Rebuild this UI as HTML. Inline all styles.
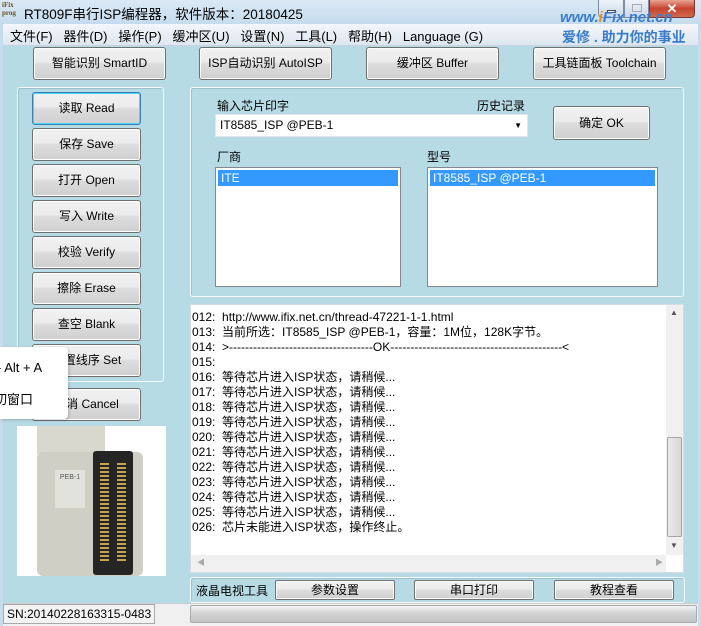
<!DOCTYPE html>
<html><head><meta charset="utf-8"><style>
*{margin:0;padding:0;box-sizing:border-box}
body{width:701px;height:626px;overflow:hidden;position:relative;background:#b7dbe5;font-family:"Liberation Sans","Noto Sans CJK SC",sans-serif;font-size:12px;color:#000}
.a{position:absolute}
.btn{position:absolute;border:1px solid #707070;border-radius:3px;background:linear-gradient(#f2f2f2,#ebebeb 45%,#dddddd 50%,#cfcfcf);text-align:center;font-size:12px;color:#000;box-shadow:inset 0 0 0 1px #fcfcfc}
.grp{position:absolute;border:1px solid #f4fafc;border-radius:3px;box-shadow:inset 1px 1px 0 #9cc1cc}
.list{position:absolute;background:#fff;border:1px solid #828790}
.sel{background:#3399ff;color:#fff;height:16px;line-height:16px;padding-left:3px;margin:2px 2px 0 2px}
.log div{height:15px;line-height:15px;white-space:pre}
</style></head><body>
<div class="a" style="left:0;top:0;width:701px;height:24px;background:linear-gradient(#dbe9f5,#c5dcee)"></div>
<div class="a" style="left:2px;top:1px;width:16px;height:20px;font:bold 7px 'Liberation Serif',serif;color:#6a5520;line-height:8px">iFix<br>prog</div>
<div class="a" style="left:24px;top:3px;font-size:13.5px">RT809F串行ISP编程器，软件版本：20180425</div>
<div class="a" style="left:598px;top:0;width:26px;height:18px;border:1px solid #7c8ea5;border-top:0;border-radius:0 0 0 4px;background:linear-gradient(#eef3f9,#cad9ea)"><div class="a" style="left:8px;top:10px;width:9px;height:3px;background:#fff;border:1px solid #444"></div></div>
<div class="a" style="left:624px;top:0;width:25px;height:18px;border:1px solid #7c8ea5;border-top:0;background:linear-gradient(#eef3f9,#cad9ea)"><div class="a" style="left:7px;top:4px;width:10px;height:8px;border:1px solid #aaa"></div></div>
<div class="a" style="left:649px;top:0;width:46px;height:18px;border:1px solid #7a3530;border-top:0;border-radius:0 0 4px 0;background:linear-gradient(#e8a493,#c7432f 50%,#d06a4e);color:#fff;font-weight:bold;text-align:center;font-size:13px;line-height:17px">✕</div>
<div class="a" style="left:560px;top:9px;font:italic bold 15px 'Liberation Sans',sans-serif;color:#3a7cc9">www.<span style="color:#e98a1a">i</span>Fix.net.cn</div>
<div class="a" style="left:3px;top:24px;width:696px;height:22px;background:linear-gradient(#f4f7fb,#dde6ef);border-bottom:1px solid #c8d3df"></div>
<div class="a" style="left:10px;top:26px;font-size:13px;white-space:nowrap">文件(F)&nbsp;&nbsp;&nbsp;器件(D)&nbsp;&nbsp;&nbsp;操作(P)&nbsp;&nbsp;&nbsp;缓冲区(U)&nbsp;&nbsp;&nbsp;设置(N)&nbsp;&nbsp;&nbsp;工具(L)&nbsp;&nbsp;&nbsp;帮助(H)&nbsp;&nbsp;&nbsp;Language (G)</div>
<div class="a" style="left:562px;top:27px;font-size:14px;font-weight:bold;color:#3a7cc9">爱修 . 助力你的事业</div>
<div class="a" style="left:0;top:24px;width:3px;height:602px;background:#c5dcee"></div>
<div class="a" style="left:698px;top:24px;width:3px;height:602px;background:#c5dcee"></div>
<div class="btn" style="left:33px;top:47px;width:133px;height:33px;line-height:31px">智能识别 SmartID</div>
<div class="btn" style="left:199px;top:47px;width:133px;height:33px;line-height:31px">ISP自动识别 AutoISP</div>
<div class="btn" style="left:366px;top:47px;width:133px;height:33px;line-height:31px">缓冲区 Buffer</div>
<div class="btn" style="left:533px;top:47px;width:133px;height:33px;line-height:31px">工具链面板 Toolchain</div>
<div class="grp" style="left:17px;top:87px;width:147px;height:295px"></div>
<div class="btn" style="left:32px;top:92px;width:109px;height:33px;line-height:31px;border-color:#3c7fb1;box-shadow:inset 0 0 0 1px #48d5f9">读取 Read</div>
<div class="btn" style="left:32px;top:128px;width:109px;height:33px;line-height:31px">保存 Save</div>
<div class="btn" style="left:32px;top:164px;width:109px;height:33px;line-height:31px">打开 Open</div>
<div class="btn" style="left:32px;top:200px;width:109px;height:33px;line-height:31px">写入 Write</div>
<div class="btn" style="left:32px;top:236px;width:109px;height:33px;line-height:31px">校验 Verify</div>
<div class="btn" style="left:32px;top:272px;width:109px;height:33px;line-height:31px">擦除 Erase</div>
<div class="btn" style="left:32px;top:308px;width:109px;height:33px;line-height:31px">查空 Blank</div>
<div class="btn" style="left:32px;top:344px;width:109px;height:33px;line-height:31px">设置线序 Set</div>
<div class="btn" style="left:32px;top:388px;width:109px;height:33px;line-height:31px">取消 Cancel</div>
<div class="a" style="left:0;top:347px;width:68px;height:72px;background:#fff;border-radius:0 4px 4px 0;box-shadow:1px 1px 3px rgba(0,0,0,.2);font-size:13px;overflow:hidden">
<div class="a" style="left:-3px;top:13px;white-space:nowrap">- Alt + A</div>
<div class="a" style="left:-6px;top:42px;white-space:nowrap">切窗口</div></div>
<div class="a" style="left:17px;top:426px;width:149px;height:150px;background:#fff;overflow:hidden">
<div class="a" style="left:20px;top:0;width:68px;height:28px;background:#d8d8cf"></div>
<div class="a" style="left:20px;top:26px;width:106px;height:124px;background:#cfcfc6;border-radius:6px"></div>
<div class="a" style="left:38px;top:44px;width:30px;height:38px;background:#e2e2dc;font-size:7px;text-align:center;color:#555;line-height:16px">PEB-1</div>
<div class="a" style="left:76px;top:25px;width:40px;height:124px;background:#252525;border-radius:3px"></div>
<div class="a" style="left:83px;top:37px;width:9px;height:100px;background:repeating-linear-gradient(#c9a34a 0 2px,#252525 2px 4px)"></div>
<div class="a" style="left:100px;top:37px;width:9px;height:100px;background:repeating-linear-gradient(#c9a34a 0 2px,#252525 2px 4px)"></div>
</div>
<div class="grp" style="left:190px;top:87px;width:494px;height:210px"></div>
<div class="a" style="left:217px;top:97px">输入芯片印字</div>
<div class="a" style="left:477px;top:97px">历史记录</div>
<div class="a" style="left:215px;top:114px;width:313px;height:23px;background:#fff;border:1px solid #e2e6ea;line-height:21px;padding-left:4px">IT8585_ISP @PEB-1<span class="a" style="right:5px;top:0;font-size:8px">▼</span></div>
<div class="btn" style="left:553px;top:106px;width:97px;height:34px;line-height:32px">确定 OK</div>
<div class="a" style="left:217px;top:148px">厂商</div>
<div class="a" style="left:427px;top:148px">型号</div>
<div class="list" style="left:215px;top:167px;width:186px;height:120px"><div class="sel">ITE</div></div>
<div class="list" style="left:427px;top:167px;width:231px;height:120px"><div class="sel">IT8585_ISP @PEB-1</div></div>
<div class="a" style="left:190px;top:304px;width:494px;height:269px;background:#fff;border:1px solid #d5dde3"></div>
<div class="a log" style="left:192px;top:310px;font-size:12px">
<div>012:  http://www.ifix.net.cn/thread-47221-1-1.html</div>
<div>013:  当前所选：IT8585_ISP @PEB-1，容量：1M位，128K字节。</div>
<div>014:  &gt;------------------------------------OK-------------------------------------------&lt;</div>
<div>015:</div>
<div>016:  等待芯片进入ISP状态，请稍候...</div>
<div>017:  等待芯片进入ISP状态，请稍候...</div>
<div>018:  等待芯片进入ISP状态，请稍候...</div>
<div>019:  等待芯片进入ISP状态，请稍候...</div>
<div>020:  等待芯片进入ISP状态，请稍候...</div>
<div>021:  等待芯片进入ISP状态，请稍候...</div>
<div>022:  等待芯片进入ISP状态，请稍候...</div>
<div>023:  等待芯片进入ISP状态，请稍候...</div>
<div>024:  等待芯片进入ISP状态，请稍候...</div>
<div>025:  等待芯片进入ISP状态，请稍候...</div>
<div>026:  芯片未能进入ISP状态，操作终止。</div>
</div>
<div class="a" style="left:666px;top:305px;width:17px;height:250px;background:#f0f0f0"></div>
<div class="a" style="left:667px;top:437px;width:15px;height:100px;background:linear-gradient(90deg,#eaeaea,#d8d8d8);border:1px solid #a5a5a5;border-radius:2px"></div>
<div class="a" style="left:670px;top:308px;font-size:8px;color:#555">▲</div>
<div class="a" style="left:670px;top:541px;font-size:8px;color:#555">▼</div>
<div class="a" style="left:191px;top:555px;width:475px;height:17px;background:#f0f0f0"></div>
<div class="a" style="left:197px;top:557px;font-size:8px;color:#aaa">◀</div>
<div class="a" style="left:655px;top:557px;font-size:8px;color:#aaa">▶</div>
<div class="grp" style="left:190px;top:577px;width:495px;height:26px"></div>
<div class="a" style="left:196px;top:582px">液晶电视工具</div>
<div class="btn" style="left:275px;top:580px;width:120px;height:20px;line-height:18px;border-radius:2px">参数设置</div>
<div class="btn" style="left:414px;top:580px;width:120px;height:20px;line-height:18px;border-radius:2px">串口打印</div>
<div class="btn" style="left:554px;top:580px;width:120px;height:20px;line-height:18px;border-radius:2px">教程查看</div>
<div class="a" style="left:3px;top:603px;width:695px;height:23px;background:#f0f0f0;border-top:1px solid #ccc"></div>
<div class="a" style="left:3px;top:604px;width:152px;height:20px;border:1px solid #aaa;background:#f3f3f3;line-height:18px;padding-left:3px;overflow:hidden;white-space:nowrap;font-size:12px">SN:20140228163315-0483</div>
<div class="a" style="left:190px;top:605px;width:507px;height:18px;border:1px solid #aaa;border-radius:2px;background:linear-gradient(#f3f3f3,#d2d2d2 50%,#c4c4c4)"></div>
</body></html>
